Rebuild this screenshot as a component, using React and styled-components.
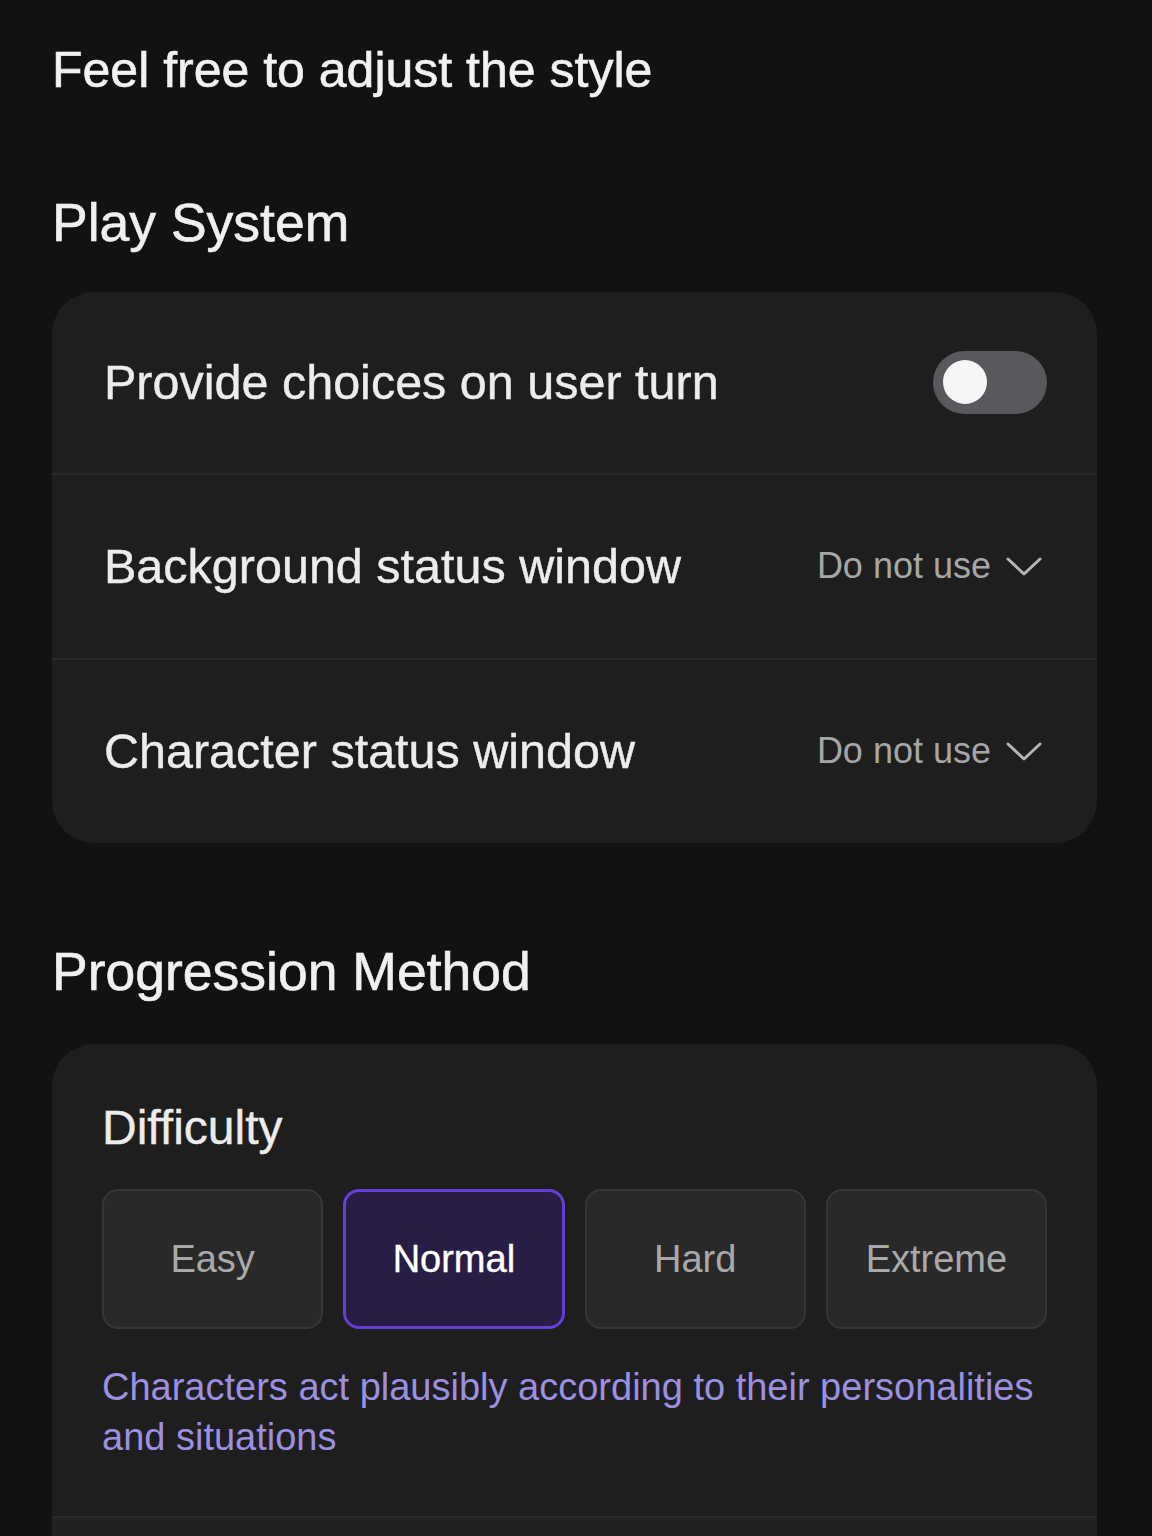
import React, { useState } from "react";
import styled, { createGlobalStyle } from "styled-components";

const GlobalStyle = createGlobalStyle`
  html, body {
    margin: 0;
    padding: 0;
    background: #121212;
  }
  body {
    font-family: "Liberation Sans", Arial, sans-serif;
    color: #eeeeee;
  }
  * {
    box-sizing: border-box;
  }
`;

const difficulties = ["Easy", "Normal", "Hard", "Extreme"];

const App = () => {
  const [choices, setChoices] = useState(false);
  const [level, setLevel] = useState("Normal");

  return (
    <Page>
      <GlobalStyle />
      <PageTitle>Feel free to adjust the style</PageTitle>

      <SectionTitle $top={101} $bottom={42}>
        Play System
      </SectionTitle>
      <Card>
        <Row>
          <Label>Provide choices on user turn</Label>
          <Toggle $on={choices} onClick={() => setChoices(!choices)}>
            <Knob $on={choices} />
          </Toggle>
        </Row>
        <Row>
          <Label>Background status window</Label>
          <Select>
            Do not use
            <Chevron />
          </Select>
        </Row>
        <Row>
          <Label>Character status window</Label>
          <Select>
            Do not use
            <Chevron />
          </Select>
        </Row>
      </Card>

      <SectionTitle $top={102} $bottom={46}>
        Progression Method
      </SectionTitle>
      <Card>
        <Block>
          <BlockTitle>Difficulty</BlockTitle>
          <Options>
            {difficulties.map((d) => (
              <Option key={d} $active={d === level} onClick={() => setLevel(d)}>
                {d}
              </Option>
            ))}
          </Options>
          <Hint>
            Characters act plausibly according to their personalities and
            situations
          </Hint>
        </Block>
        <Block $rest />
      </Card>
    </Page>
  );
};

const Chevron = () => (
  <svg width="36" height="20" viewBox="0 0 36 20" fill="none">
    <polyline
      points="2,3 18,18 34,3"
      stroke="#b4b4b4"
      strokeWidth="3"
      strokeLinecap="round"
      strokeLinejoin="round"
    />
  </svg>
);

export default App;

const Page = styled.div`
  padding: 45px 55px 120px 52px;
  min-height: 100vh;
`;

const PageTitle = styled.h1`
  margin: 0;
  font-size: 50px;
  line-height: 1;
  font-weight: 400;
  color: #f2f2f2;
  -webkit-text-stroke: 0.6px #f2f2f2;
`;

const SectionTitle = styled.h2`
  margin: ${({ $top, $bottom }) => `${$top}px 0 ${$bottom}px`};
  font-size: 53.5px;
  line-height: 1;
  font-weight: 400;
  color: #f0f0f0;
  -webkit-text-stroke: 0.6px #f0f0f0;
`;

const Card = styled.section`
  background: #1e1e1e;
  border-radius: 42px;
  overflow: hidden;
`;

const Row = styled.div`
  height: 185px;
  display: flex;
  align-items: center;
  justify-content: space-between;
  padding: 0 50px 0 52px;
  &:first-child {
    height: 181px;
  }
  & + & {
    border-top: 2px solid #282828;
  }
`;

const Label = styled.span`
  font-size: 48.5px;
  color: #ececec;
  -webkit-text-stroke: 0.4px #ececec;
`;

const Toggle = styled.button`
  width: 114px;
  height: 63px;
  border: none;
  border-radius: 32px;
  padding: 0 10px;
  background: ${({ $on }) => ($on ? "#6a45d8" : "#58595c")};
  display: flex;
  align-items: center;
  justify-content: ${({ $on }) => ($on ? "flex-end" : "flex-start")};
  cursor: pointer;
`;

const Knob = styled.span`
  width: 44px;
  height: 44px;
  border-radius: 50%;
  background: #f6f6f6;
`;

const Select = styled.div`
  display: flex;
  align-items: center;
  gap: 15px;
  font-size: 36px;
  color: #a6a6a6;
  padding-right: 5px;
`;

const Block = styled.div`
  padding: ${({ $rest }) => ($rest ? "80px 50px" : "60px 50px 54px")};
  & + & {
    border-top: 2px solid #282828;
    background: #212121;
  }
`;

const BlockTitle = styled.h3`
  margin: 0 0 37px;
  font-size: 48px;
  line-height: 1;
  font-weight: 400;
  color: #ececec;
  -webkit-text-stroke: 0.4px #ececec;
`;

const Options = styled.div`
  display: grid;
  grid-template-columns: repeat(4, 1fr);
  gap: 20px;
  margin-bottom: 33px;
`;

const Option = styled.button`
  height: 140px;
  border-radius: 16px;
  font-family: inherit;
  font-size: 38px;
  cursor: pointer;
  border: ${({ $active }) =>
    $active ? "3px solid #6440d4" : "2px solid #363636"};
  background: ${({ $active }) => ($active ? "#281d45" : "#292929")};
  color: ${({ $active }) => ($active ? "#ffffff" : "#a9a9a9")};
  -webkit-text-stroke: ${({ $active }) => ($active ? "0.4px #ffffff" : "0")};
`;

const Hint = styled.p`
  margin: 0;
  font-size: 38px;
  line-height: 50px;
  color: #9c90e2;
`;
